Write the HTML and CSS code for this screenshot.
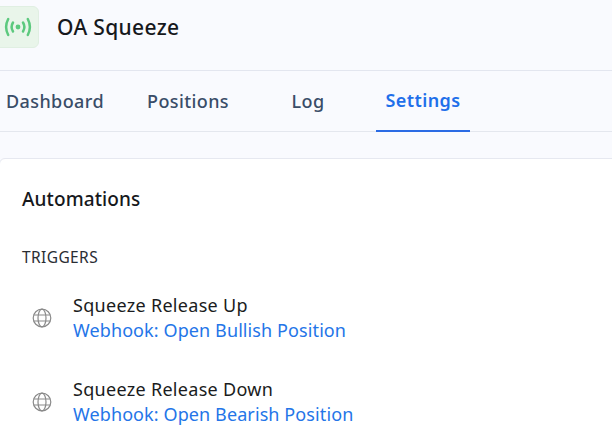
FILE: index.html
```html
<!DOCTYPE html>
<html lang="en">
<head>
<meta charset="utf-8">
<title>OA Squeeze</title>
<link rel="stylesheet" href="styles.css">
</head>
<body>
<header class="header">
  <div class="logo">
    <svg class="logo-icon" viewBox="0 0 28 20" fill="none" stroke="#5cc97e" stroke-width="2.5" stroke-linecap="round">
      <circle cx="14" cy="10" r="2.4" fill="#5cc97e" stroke="none"/>
      <path d="M9 5.5Q6.2 10 9 14.5"/>
      <path d="M19 5.5Q21.8 10 19 14.5"/>
      <path d="M4.2 2Q0 10 4.2 18"/>
      <path d="M23.8 2Q28 10 23.8 18"/>
    </svg>
  </div>
  <h1 class="app-name">OA Squeeze</h1>
</header>
<nav class="tabs">
  <a class="tab tab-dashboard">Dashboard</a>
  <a class="tab tab-positions">Positions</a>
  <a class="tab tab-log">Log</a>
  <a class="tab tab-settings active">Settings</a>
</nav>
<main class="card">
  <h2 class="card-title">Automations</h2>
  <h3 class="section-label">TRIGGERS</h3>
  <ul class="list">
    <li class="item">
      <svg class="globe" viewBox="0 0 20 20" fill="none" stroke="#8a8a8a" stroke-width="1.2">
        <circle cx="10" cy="10" r="8.8"/>
        <ellipse cx="10" cy="10" rx="4" ry="8.8"/>
        <path d="M1.8 7h16.4M1.8 13h16.4"/>
      </svg>
      <div class="item-text">
        <div class="item-title">Squeeze Release Up</div>
        <a class="item-link">Webhook: Open Bullish Position</a>
      </div>
    </li>
    <li class="item">
      <svg class="globe" viewBox="0 0 20 20" fill="none" stroke="#8a8a8a" stroke-width="1.2">
        <circle cx="10" cy="10" r="8.8"/>
        <ellipse cx="10" cy="10" rx="4" ry="8.8"/>
        <path d="M1.8 7h16.4M1.8 13h16.4"/>
      </svg>
      <div class="item-text">
        <div class="item-title">Squeeze Release Down</div>
        <a class="item-link">Webhook: Open Bearish Position</a>
      </div>
    </li>
  </ul>
</main>
</body>
</html>
```
FILE: styles.css
```css
* { box-sizing: border-box; }
html, body { margin: 0; height: 100%; overflow: hidden; }
body {
  background: #f9fafe;
  font-family: "Noto Sans", "Open Sans", sans-serif;
  color: #16181c;
}
.header {
  display: flex;
  align-items: center;
  height: 71px;
  padding-bottom: 17px;
  gap: 18px;
  border-bottom: 1px solid #e3e6ef;
}
.logo {
  width: 46px;
  height: 42px;
  margin-left: -7px;
  display: flex;
  align-items: center;
  justify-content: center;
  padding-left: 4px;
  background: #e9f5ea;
  border: 1px solid #e0efe2;
  border-radius: 6px;
}
.logo-icon { width: 28px; height: 20px; }
.app-name { margin: 0; font-size: 21px; line-height: 28px; font-weight: 500; letter-spacing: 0.35px; }
.tabs {
  display: flex;
  height: 61px;
  border-bottom: 1px solid #e4e7ee;
}
.tab {
  display: flex;
  align-items: center;
  justify-content: center;
  height: 61px;
  padding-bottom: 1px;
  font-size: 18px;
  font-weight: 500;
  letter-spacing: 0.4px;
  color: #3a4d68;
}
.tab-dashboard { width: 110px; }
.tab-positions { width: 110px; margin-left: 23px; }
.tab-log { width: 72px; margin-left: 29px; }
.tab-settings { width: 94px; margin-left: 32px; }
.active { color: #1f6fea; font-weight: 600; border-bottom: 2px solid #2b6be4; }
.card {
  margin: 26px -8px 0 -1px;
  height: 300px;
  padding: 27px 25px 27px 22px;
  background: #fff;
  border: 1px solid #e6e8f0;
  border-radius: 6px 0 0 0;
}
.card-title { margin: 0; font-size: 19px; line-height: 26px; font-weight: 500; letter-spacing: 0.1px; }
.section-label { margin: 35px 0 0; font-size: 15.5px; line-height: 20px; font-weight: 400; letter-spacing: 0.4px; color: #2a2d33; }
.list { list-style: none; margin: 22px 0 0; padding: 0; }
.item { display: flex; align-items: center; height: 84px; padding-bottom: 26px; }
.globe { width: 20px; height: 20px; margin-left: 10px; flex: none; }
.item-text { margin-left: 21px; }
.item-title { font-size: 18px; line-height: 25px; letter-spacing: 0.3px; color: #1a1c20; }
.item-link { display: block; font-size: 18px; line-height: 25px; letter-spacing: 0.1px; color: #2475e8; }
```
